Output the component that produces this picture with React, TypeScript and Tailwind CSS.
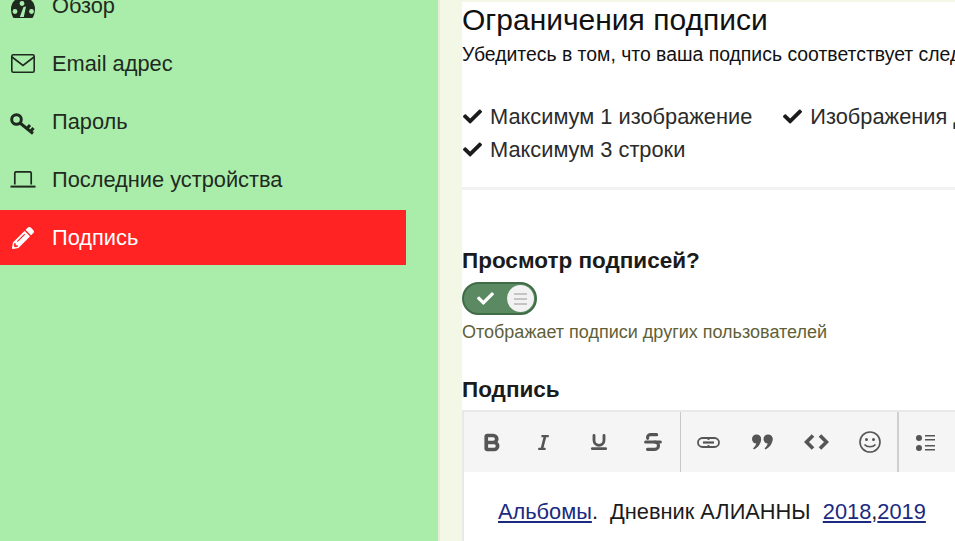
import { FaCheck, FaItalic, FaPencilAlt } from "react-icons/fa";
import { Bold, Strikethrough, Underline } from "lucide-react";
import type { ReactNode } from "react";

/* sidebar icons drawn by hand, the icon packs have nothing this close */
function DashIcon() {
  return (
    <svg width="24" height="24" viewBox="0 0 24 24">
      <path d="M2.5 24C.8 21.5 0 18 0 15a12 12 0 0 1 24 0c0 3-.8 6.500-2.500 9z" fill="currentColor" />
      <g fill="#aaedaa">
        <circle cx="4" cy="17.500" r="2.400" />
        <circle cx="11" cy="9.500" r="2.400" />
        <circle cx="20.500" cy="17.500" r="2.400" />
        <path d="M12.500 13l2.500-.5-2.200 10.500h-4z" />
      </g>
    </svg>
  );
}

function MailIcon() {
  return (
    <svg width="24" height="19" viewBox="0 0 24 19" fill="none" stroke="currentColor" strokeWidth="1.600">
      <rect x=".8" y=".8" width="22.400" height="17.400" rx="1.500" />
      <path d="M1 3l11 8.500L23 3" />
    </svg>
  );
}

function KeyIcon() {
  return (
    <svg width="26" height="26" viewBox="0 0 26 26" fill="none" stroke="currentColor" strokeWidth="3">
      <circle cx="6.500" cy="10.500" r="4.800" />
      <path d="M10 14l13 10.500M17 19.500l3-3.500M20.500 22.500l3-3.500" />
    </svg>
  );
}

function LaptopIcon() {
  return (
    <svg width="26" height="17" viewBox="0 0 26 17" fill="none" stroke="currentColor" strokeWidth="1.700">
      <path d="M4.800 13.500V2.200A1.400 1.400 0 0 1 6.200.8h13.600a1.400 1.400 0 0 1 1.400 1.400v11.300" />
      <path d="M.5 15.600h25" strokeWidth="2" />
    </svg>
  );
}

/* toolbar icons */
function LinkIcon() {
  return (
    <svg width="23" height="11" viewBox="0 0 23 11" fill="none" stroke="currentColor" strokeWidth="1.800">
      <rect x="1" y="1" width="21" height="9" rx="4.500" />
      <path d="M6 5.500h11" strokeWidth="2.200" />
      <path d="M11.500 1v2M11.500 8v2" />
    </svg>
  );
}

function QuoteIcon() {
  return (
    <svg width="23" height="16" viewBox="0 0 23 16" fill="currentColor">
      <circle cx="5.500" cy="5" r="4.500" />
      <path d="M6.500 .8c3.500 1 4 3.500 3.500 6C9.300 10 7 13.800 3 15.500l-1-1.300c2.200-1.600 3.200-3.700 3.300-6z" />
      <circle cx="17" cy="5" r="4.500" />
      <path d="M18 .8c3.500 1 4 3.500 3.500 6-.7 3.200-3 7-7 8.700l-1-1.300c2.200-1.600 3.200-3.700 3.300-6z" />
    </svg>
  );
}

function CodeIcon() {
  return (
    <svg width="25" height="16" viewBox="0 0 25 16" fill="none" stroke="currentColor" strokeWidth="3.600">
      <path d="M9 1.500L2.500 8 9 14.500M16 1.500L22.500 8 16 14.500" />
    </svg>
  );
}

function SmileIcon() {
  return (
    <svg width="22" height="22" viewBox="0 0 22 22" fill="none" stroke="currentColor" strokeWidth="1.600">
      <circle cx="11" cy="11" r="10" />
      <circle cx="7.500" cy="8.500" r="1.500" fill="currentColor" stroke="none" />
      <circle cx="14.500" cy="8.500" r="1.500" fill="currentColor" stroke="none" />
      <path d="M5.500 13.500c2.500 3 8.500 3 11 0" />
    </svg>
  );
}

function ListIcon() {
  return (
    <svg width="20" height="17" viewBox="0 0 20 17" fill="currentColor">
      <circle cx="3" cy="4" r="3" />
      <circle cx="3" cy="14" r="3" />
      <path d="M9 1h10v1.500H9zM9 5h10v1.500H9zM9 11h10v1.500H9zM9 15h10v1.500H9z" />
    </svg>
  );
}

const navItems: { label: string; icon: ReactNode; active?: boolean }[] = [
  { label: "Обзор", icon: <DashIcon /> },
  { label: "Email адрес", icon: <MailIcon /> },
  { label: "Пароль", icon: <KeyIcon /> },
  { label: "Последние устройства", icon: <LaptopIcon /> },
  { label: "Подпись", icon: <FaPencilAlt size={22} />, active: true },
];

const toolbarGroups = [
  [
    <Bold size={21} strokeWidth={4.2} />,
    <FaItalic size={17} className="-ml-[4px]" />,
    <Underline size={20} strokeWidth={3.4} />,
    <Strikethrough size={22} strokeWidth={3.4} />,
  ],
  [<LinkIcon />, <QuoteIcon />, <CodeIcon />, <SmileIcon />],
  [<ListIcon />],
];

function Rule({ children }: { children: ReactNode }) {
  return (
    <span className="flex items-center gap-[8px] whitespace-nowrap pl-[1px]">
      <FaCheck size={19} className="text-[#1b1b1b]" />
      {children}
    </span>
  );
}

export default function App() {
  return (
    <div className="flex h-[541px] w-[955px] overflow-hidden bg-[#f3f7e6] font-['Liberation_Sans',Arial,sans-serif] text-[#1b1b1b]">
      {/* sidebar */}
      <aside className="w-[440px] shrink-0 border-r-2 border-[#e8ebdc] bg-[#aaedaa]">
        <nav className="-mt-[22px] w-[406px]">
          {navItems.map((item) => (
            <div
              key={item.label}
              className={`flex h-[55px] items-center gap-[16px] pl-[10px] text-[21.8px] ${item.active ? "bg-[#ff2323] text-white" : "mb-[3px] text-[#1f2a1f]"}`}
            >
              <span className="flex w-[26px] shrink-0 justify-center">{item.icon}</span>
              <span className="pt-[2px]">{item.label}</span>
            </div>
          ))}
        </nav>
      </aside>

      {/* main content */}
      <main className="ml-[22px] mt-[2px] min-w-0 flex-1 overflow-hidden bg-white">
        <section className="h-[188px] border-b-[3px] border-[#f2f2f2]">
          <h1 className="pt-[1px] text-[30px] leading-[34px] text-[#111]">Ограничения подписи</h1>
          <p className="mt-[6px] whitespace-nowrap text-[19.4px] leading-[23px] text-[#111]">
            Убедитесь в том, что ваша подпись соответствует следующим требованиям:
          </p>
          <div className="mt-[34px] flex gap-[30px] text-[21.8px] leading-[33px] text-[#2b2b2b]">
            <Rule>Максимум 1 изображение</Rule>
            <Rule>Изображения до 500 пикселей</Rule>
          </div>
          <div className="text-[21.8px] leading-[33px] text-[#2b2b2b]">
            <Rule>Максимум 3 строки</Rule>
          </div>
        </section>

        <h2 className="mt-[58px] text-[22.5px] font-bold leading-[26px] text-[#1b1b1b]">Просмотр подписей?</h2>
        <div className="mt-[8px] flex h-[33px] w-[75px] items-center justify-between rounded-full border-2 border-[#3f6b45] bg-[#5b8a62] pl-[13px] pr-[1px]">
          <FaCheck size={17} className="text-white" />
          <span className="flex h-[27px] w-[27px] flex-col items-center justify-center gap-[3px] rounded-full bg-[#f2f2f2]">
            <span className="h-[2px] w-[13px] bg-[#c4c4c4]" />
            <span className="h-[2px] w-[13px] bg-[#c4c4c4]" />
            <span className="h-[2px] w-[13px] bg-[#c4c4c4]" />
          </span>
        </div>
        <p className="mt-[6px] whitespace-nowrap text-[18px] leading-[22px] text-[#5f5f38]">Отображает подписи других пользователей</p>

        <h2 className="mt-[34px] text-[22.5px] font-bold leading-[26px] text-[#1b1b1b]">Подпись</h2>
        <div className="mt-[7px] h-[200px] border-l-2 border-t-2 border-[#e9e9e9]">
          <div className="flex h-[60px] bg-[#f5f5f5] text-[#555]">
            {toolbarGroups.map((group, g) => (
              <div
                key={g}
                className={`flex items-center ${g === 0 ? "border-r border-[#c8c8c8]" : g === 1 ? "border-r-2 border-[#cfcfcf]" : ""}`}
              >
                {group.map((icon, i) => (
                  <span key={i} className="flex w-[54px] justify-center">{icon}</span>
                ))}
              </div>
            ))}
          </div>
          <p className="whitespace-pre pl-[34px] pt-[27px] text-[21.8px] leading-[26px] text-[#1b1b1b]">
            <a className="text-[#1a2a80] underline">Альбомы</a>.  Дневник АЛИАННЫ  <a className="text-[#1a2a80] underline">2018</a>,<a className="text-[#1a2a80] underline">2019</a>
          </p>
        </div>
      </main>
    </div>
  );
}
